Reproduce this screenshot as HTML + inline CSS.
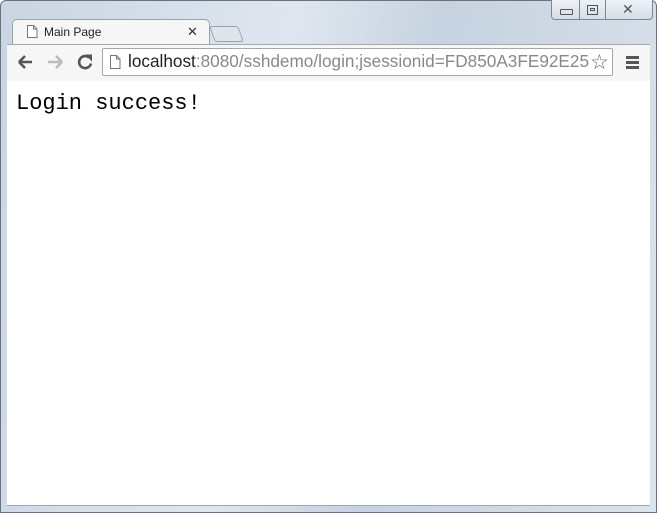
<!DOCTYPE html>
<html><head><style>
body{margin:0;width:657px;height:513px;overflow:hidden;background:#fff;font-family:"Liberation Sans",sans-serif}
.win{position:absolute;left:0;top:0;width:655px;height:511px;border:1px solid #6a737d;border-radius:6px 6px 0 0;background:linear-gradient(100deg,#c9d5e3,#dfe6ef 40%,#c6d2e0 60%,#dbe3ec);}
.tb{position:absolute;top:0;height:19px;border:1px solid #7d8794;border-top:none;background:linear-gradient(#eef2f7,#d5dde8)}
.tab{position:absolute;left:12px;top:19px;width:196px;height:26px;background:#f6f6f6;border:1px solid #9aa3ad;border-bottom:none;border-radius:5px 5px 0 0}
.tool{position:absolute;left:7px;top:44px;width:643px;height:36px;background:#f6f6f6;border-top:1px solid #a4aab2;border-bottom:1px solid #a9a9a9}
.addr{position:absolute;left:102px;top:48px;width:511px;height:28px;background:#fff;border:1px solid #a7a7a7;border-radius:2px;box-sizing:border-box}
.content{position:absolute;left:7px;top:81px;width:643px;height:424px;background:#fff;border-bottom:1px solid #9aa}
</style></head><body>
<div class="win"></div>
<div class="tb" style="left:551px;width:27px;border-left:1px solid #7d8794;border-radius:0 0 0 4px"></div>
<div class="tb" style="left:579px;width:25px"></div>
<div class="tb" style="left:605px;width:46px;border-radius:0 0 4px 0"></div>
<div style="position:absolute;left:560px;top:9px;width:11px;height:4px;border:1px solid #555;border-radius:1px"></div>
<div style="position:absolute;left:587px;top:5px;width:9px;height:8px;border:1px solid #555"><div style="margin:2px;width:5px;height:3px;border:1px solid #555;box-sizing:border-box"></div></div>
<div style="position:absolute;left:622px;top:1px;font-size:14px;color:#555">✕</div>
<div class="tab"></div>
<div style="position:absolute;left:212px;top:26px;width:27px;height:14px;border:1px solid #9aa3ad;border-radius:3px;background:#dfe5ec;transform:skewX(20deg)"></div>
<svg style="position:absolute;left:27px;top:25px" width="11" height="13"><path d="M.5 .5h6l3.5 3.5v8.5h-9.5z M6.5 .5v3.5h3.5" fill="#fff" stroke="#777"/></svg>
<div style="position:absolute;left:44px;top:25px;font-size:12px;color:#222">Main Page</div>
<div style="position:absolute;left:187px;top:24px;font-size:13px;color:#333">✕</div>
<div class="tool"></div>
<svg style="position:absolute;left:16px;top:53px" width="80" height="18">
<path d="M3 9h13M3 9l6-6M3 9l6 6" stroke="#555" stroke-width="2.6" fill="none"/>
<path d="M46 9h-14M46 9l-6-6M46 9l-6 6" stroke="#bbb" stroke-width="2.6" fill="none"/>
<path d="M73 4.5a6 6 0 1 0 2 6" stroke="#555" stroke-width="2.6" fill="none"/><path d="M69 1.5h7v7z" fill="#555"/>
</svg>
<div class="addr"></div>
<svg style="position:absolute;left:110px;top:55px" width="11" height="14"><path d="M.5 .5h6l3.5 3.5v9.5h-9.5z M6.5 .5v3.5h3.5" fill="#fff" stroke="#777"/></svg>
<div style="position:absolute;left:128px;top:51px;width:461px;overflow:hidden;white-space:nowrap;font-size:17.2px;color:#888"><span style="color:#222">localhost</span>:8080/sshdemo/login;jsessionid=FD850A3FE92E2501</div>
<div style="position:absolute;left:590px;top:50px;font-size:21px;color:#666">☆</div>
<div style="position:absolute;left:626px;top:56px;width:13px;height:3px;background:#555;box-shadow:0 5px #555,0 10px #555"></div>
<div class="content"></div>
<div style="position:absolute;left:16px;top:91px;font-family:'Liberation Mono',monospace;font-size:22px;color:#000">Login success!</div>
</body></html>
